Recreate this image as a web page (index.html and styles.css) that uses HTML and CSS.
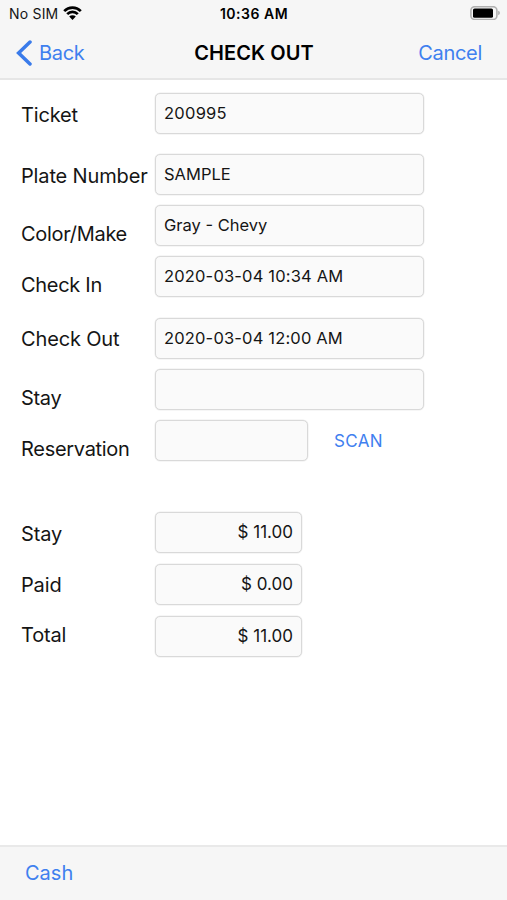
FILE: index.html
```html
<!DOCTYPE html>
<html lang="en">
<head>
<meta charset="utf-8">
<title>Check Out</title>
<link rel="stylesheet" href="styles.css">
</head>
<body>
<header class="top">
  <div class="status">
    <div class="carrier"><span>No SIM</span>
      <svg class="wifi" width="19" height="14" viewBox="0 0 19 14"><path d="M1.2 5.1A11.8 11.8 0 0 1 17.8 5.1M4.2 8.1A7.5 7.5 0 0 1 14.8 8.1" fill="none" stroke="#000" stroke-width="2.7"/><path d="M9.5 13.9 6.2 10.6A4.7 4.7 0 0 1 12.8 10.6Z"/></svg>
    </div>
    <span class="time">10:36 AM</span>
    <svg class="battery" width="30" height="14" viewBox="0 0 30 14"><rect x=".9" y=".7" width="26" height="12.8" rx="3.8" fill="none" stroke="#b0b0b0" stroke-width="1.6"/><rect x="3" y="2.4" width="20" height="9.4" rx="1.6"/><path d="M28.2 4.8Q29.9 5.4 29.9 7T28.2 9.2Z" fill="#aaa"/></svg>
  </div>
  <nav class="nav">
    <a class="back"><svg width="17" height="26" viewBox="0 0 17 26"><path d="M14 2 2.6 13 14 24" fill="none" stroke="#3a7bea" stroke-width="3.5" stroke-linecap="round"/></svg><span>Back</span></a>
    <h1>CHECK OUT</h1>
    <a class="cancel">Cancel</a>
  </nav>
</header>
<main class="form">
  <div class="row ticket"><label>Ticket</label><div class="field number">200995</div></div>
  <div class="row plate"><label>Plate Number</label><div class="field">SAMPLE</div></div>
  <div class="row low"><label>Color/Make</label><div class="field">Gray - Chevy</div></div>
  <div class="row in low"><label>Check In</label><div class="field date">2020-03-04 10:34 AM</div></div>
  <div class="row out"><label>Check Out</label><div class="field date">2020-03-04 12:00 AM</div></div>
  <div class="row low"><label>Stay</label><div class="field"></div></div>
  <div class="row res low"><label>Reservation</label><div class="field short"></div><a class="scan">SCAN</a></div>
  <div class="row fee"><label>Stay</label><div class="field money">$ 11.00</div></div>
  <div class="row paid"><label>Paid</label><div class="field money">$ 0.00</div></div>
  <div class="row total"><label>Total</label><div class="field money">$ 11.00</div></div>
</main>
<footer class="toolbar"><a class="cash">Cash</a></footer>
</body>
</html>
```

FILE: styles.css
```css
* { box-sizing: border-box; }
body { margin: 0; height: 900px; display: flex; flex-direction: column; background: #fff; color: #151515; font-family: Inter, "Liberation Sans", sans-serif; overflow: hidden; }
.top { height: 80px; background: #f6f6f6; border-bottom: 2px solid #e6e6e6; flex: none; }
.status { height: 27px; padding: 0 7px 0 9px; display: grid; grid-template-columns: 1fr auto 1fr; align-items: center; font-size: 14px; }
.carrier { display: flex; align-items: center; gap: 5px; letter-spacing: .2px; }
.carrier svg { margin-top: -2px; }
.time { font-weight: 600; color: #000; letter-spacing: .5px; margin-left: -1px; }
.battery { justify-self: end; margin-top: -1px; }
.nav { height: 52px; padding: 0 25px 0 16px; display: grid; grid-template-columns: 1fr auto 1fr; align-items: center; font-size: 20px; letter-spacing: -.3px; }
.nav h1 { margin: 0 -10px 0 0; padding-bottom: 1px; font-size: 20px; font-weight: 600; color: #000; letter-spacing: .05px; }
.back { display: flex; align-items: center; gap: 6px; }
a { color: #3f80ef; }
.cancel { justify-self: end; }
.form { flex: 1; padding: 13px 0 0 21px; }
.row { height: 41px; display: flex; align-items: center; margin-bottom: 10px; }
.row label { width: 134px; flex: none; font-size: 20px; letter-spacing: -.15px; white-space: nowrap; padding-top: 2px; }
.low label { padding-top: 17px; letter-spacing: -.3px; }
.field { width: 269px; height: 41px; border: 1px solid #d9d9d9; box-shadow: 0 0 0 .5px #ededed; border-radius: 5px; background: #fafafa; padding: 0 8px; font-size: 16.5px; line-height: 38px; }
.number { letter-spacing: .25px; }
.date { letter-spacing: .17px; }
.ticket { margin-bottom: 20px; }
.in { margin-bottom: 21px; }
.out label { padding-top: 1px; }
.short { width: 153px; }
.money { width: 147px; text-align: right; font-size: 17px; }
.scan { margin-left: 26px; font-size: 17px; letter-spacing: .35px; }
.res { margin-bottom: 51px; }
.fee { margin-bottom: 11px; }
.fee label { padding-top: 2px; }
.paid { margin-bottom: 11px; }
.paid label { padding-top: 0; }
.total label { padding-top: 0; margin-top: -4px; }
.toolbar { height: 55px; flex: none; background: #f6f6f6; border-top: 2px solid #e9e9e9; padding: 0 0 1px 25px; display: flex; align-items: center; font-size: 20px; }
```
